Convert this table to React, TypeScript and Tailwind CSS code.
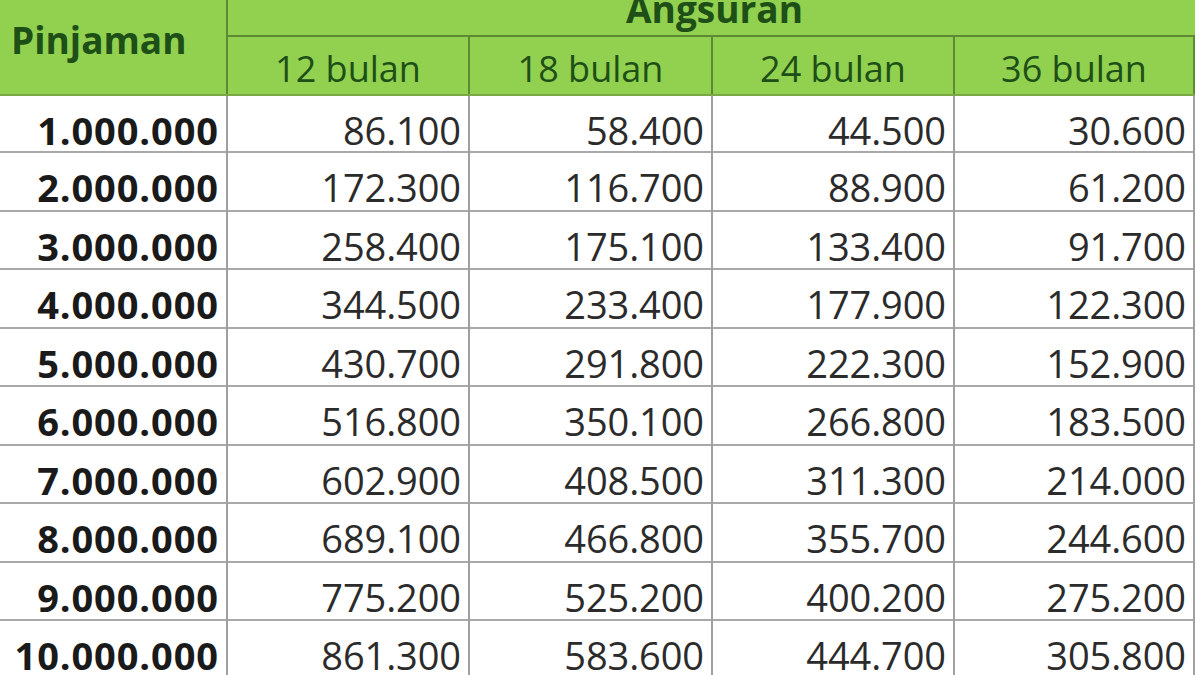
import React from "react";

const rows: string[][] = [
  ["1.000.000", "86.100", "58.400", "44.500", "30.600"],
  ["2.000.000", "172.300", "116.700", "88.900", "61.200"],
  ["3.000.000", "258.400", "175.100", "133.400", "91.700"],
  ["4.000.000", "344.500", "233.400", "177.900", "122.300"],
  ["5.000.000", "430.700", "291.800", "222.300", "152.900"],
  ["6.000.000", "516.800", "350.100", "266.800", "183.500"],
  ["7.000.000", "602.900", "408.500", "311.300", "214.000"],
  ["8.000.000", "689.100", "466.800", "355.700", "244.600"],
  ["9.000.000", "775.200", "525.200", "400.200", "275.200"],
  ["10.000.000", "861.300", "583.600", "444.700", "305.800"],
];

const cols = "grid-cols-[228px_242px_243px_242px_240px]";

export default function App() {
  return (
    <div
      className="w-[1200px] h-[675px] overflow-hidden bg-white"
      style={{ fontFamily: '"Open Sans", "Noto Sans", sans-serif' }}
    >
      <div className="w-[1195px] mt-[-16px]">
        {/* Header */}
        <div className="flex bg-[#92d050] text-[#1d4f16] border-b-2 border-[#7aa845]">
          <div className="w-[228px] shrink-0 flex items-center pl-[11px] pb-[4px] pt-[6px] border-r-2 border-[#5e8a36]">
            <span className="text-[37px] font-bold tracking-[0px]">Pinjaman</span>
          </div>
          <div className="flex-1 flex flex-col">
            <div className="h-[53px] flex items-end justify-center border-b-2 border-[#5e8a36]">
              <span className="text-[37px] font-bold leading-[53px] ml-[6px] tracking-[0px]">Angsuran</span>
            </div>
            <div className="flex h-[57px]">
              {["12 bulan", "18 bulan", "24 bulan", "36 bulan"].map((t, i) => (
                <div
                  key={t}
                  className={
                    "flex items-center justify-center pt-[6px] text-[36px] font-medium tracking-[0px] border-[#5e8a36] " +
                    (i === 0
                      ? "w-[242px] border-r-2"
                      : i === 1
                      ? "w-[243px] border-r-2"
                      : i === 2
                      ? "w-[242px] border-r-2"
                      : "flex-1 border-r-2")
                  }
                >
                  {t}
                </div>
              ))}
            </div>
          </div>
        </div>
        {/* Body */}
        {rows.map((r, ri) => (
          <div
            key={ri}
            className={`grid ${cols} ${ri === 0 ? "h-[57px]" : "h-[58.5px]"} border-b-2 border-[#a9a9a9]`}
          >
            {r.map((c, ci) => (
              <div
                key={ci}
                className={
                  "flex items-center justify-end pt-[6px] border-r-2 border-[#a0a0a0] " +
                  (ci === 0
                    ? "pr-[7px] font-bold text-[38px] text-[#1a1a1a] tracking-[0.9px]"
                    : "pr-[7px] font-medium text-[38px] text-[#2b2b2b] tracking-[-0.1px]")
                }
              >
                {c}
              </div>
            ))}
          </div>
        ))}
      </div>
    </div>
  );
}
